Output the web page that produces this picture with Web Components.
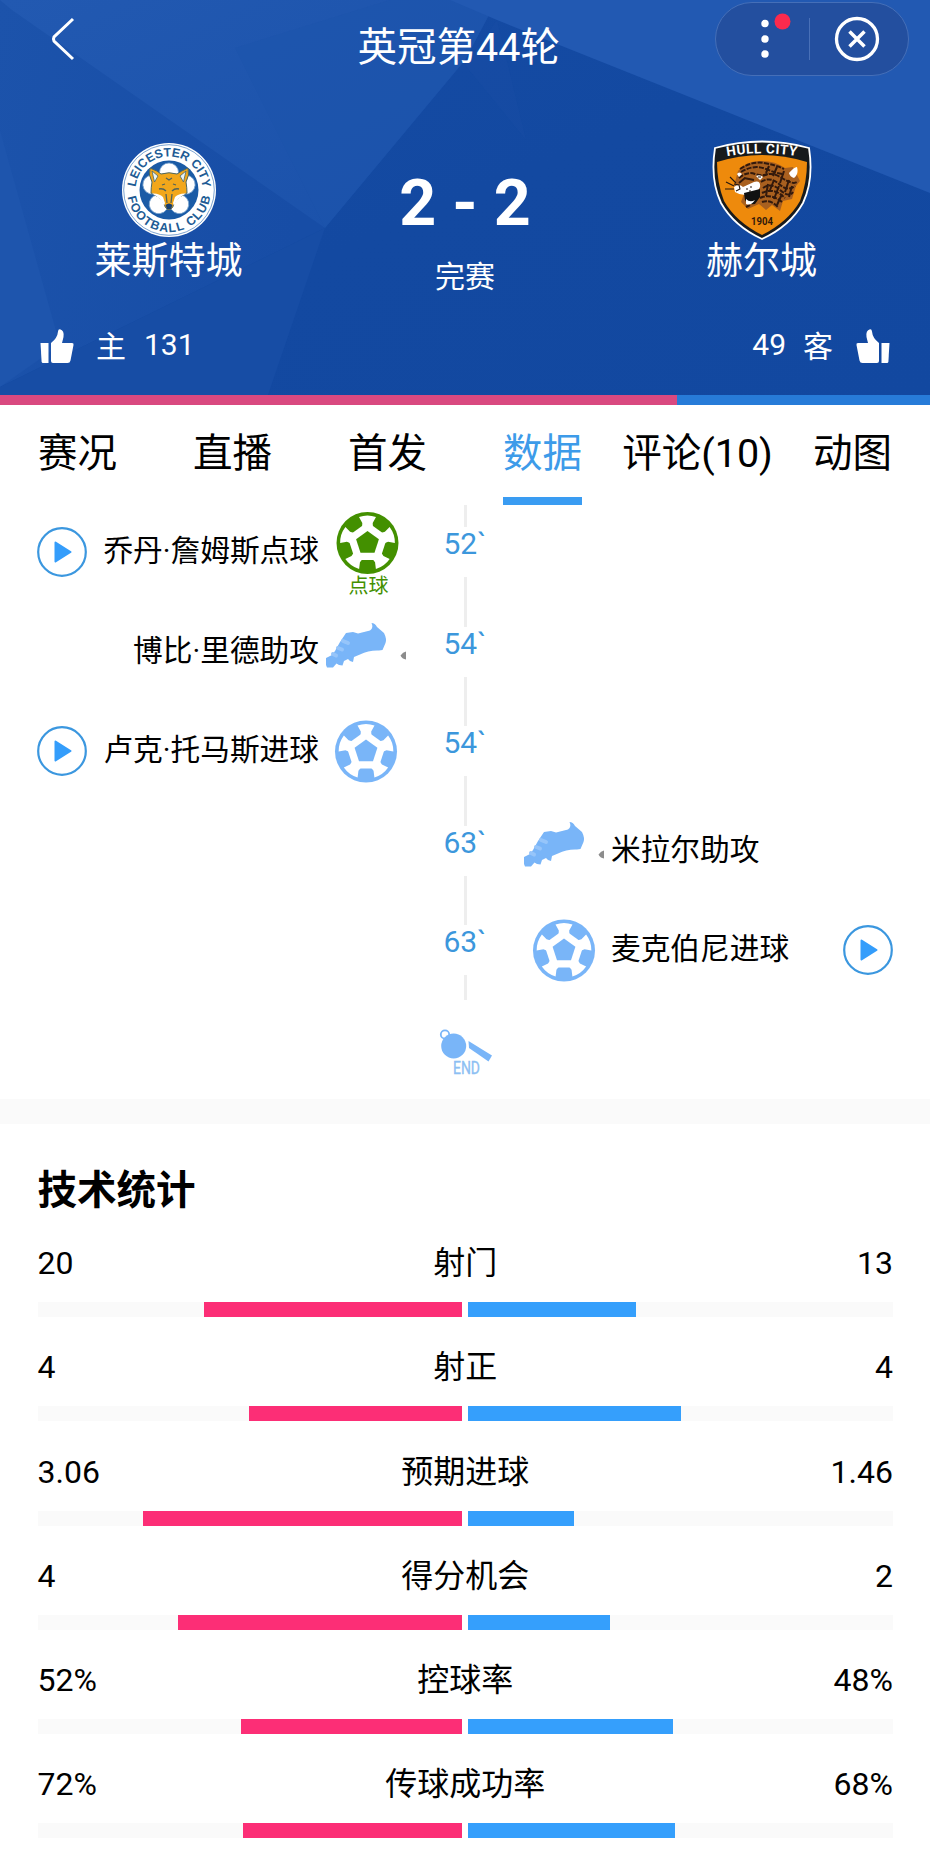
<!DOCTYPE html>
<html lang="zh-CN">
<head>
<meta charset="utf-8">
<title>英冠第44轮</title>
<style>
    body {
        margin: 0;
        width: 930px;
        height: 1857px;
        overflow: hidden;
        background: #fff;
        color: #000;
        font-family: Roboto, "Noto Sans CJK SC", sans-serif;
    }
</style>
</head>
<body>
<match-header home-likes="131" away-likes="49">
    <nav-bar slot="nav">英冠第44轮</nav-bar>
    <team-badge slot="home" crest="leicester">莱斯特城</team-badge>
    <span slot="score">2 - 2</span>
    <span slot="status">完赛</span>
    <team-badge slot="away" crest="hull">赫尔城</team-badge>
</match-header>

<tab-bar>
    <tab-item>赛况</tab-item>
    <tab-item>直播</tab-item>
    <tab-item>首发</tab-item>
    <tab-item active>数据</tab-item>
    <tab-item>评论(10)</tab-item>
    <tab-item>动图</tab-item>
</tab-bar>

<event-list>
    <match-event time="52`" side="home" icon="penalty" video>乔丹·詹姆斯点球</match-event>
    <match-event time="54`" side="home" icon="boot">博比·里德助攻</match-event>
    <match-event time="54`" side="home" icon="ball" video>卢克·托马斯进球</match-event>
    <match-event time="63`" side="away" icon="boot">米拉尔助攻</match-event>
    <match-event time="63`" side="away" icon="ball" video>麦克伯尼进球</match-event>
</event-list>

<stats-panel>
    <span slot="title">技术统计</span>
    <stat-row home="20" away="13" ratio="60.7" away-ratio="39.5">射门</stat-row>
    <stat-row home="4" away="4" ratio="50.2" away-ratio="50.2">射正</stat-row>
    <stat-row home="3.06" away="1.46" ratio="75.1" away-ratio="25">预期进球</stat-row>
    <stat-row home="4" away="2" ratio="66.9" away-ratio="33.3">得分机会</stat-row>
    <stat-row home="52%" away="48%" ratio="52.2" away-ratio="48.2">控球率</stat-row>
    <stat-row home="72%" away="68%" ratio="51.6" away-ratio="48.7">传球成功率</stat-row>
</stats-panel>

<script>
const LEICESTER = `
    <svg width="100" height="100" viewBox="-50 -50 100 100">
        <defs>
            <path id="top" d="M-33.500 0A33.500 33.500 0 0 1 33.500 0"/>
            <path id="bottom" d="M-42 0A42 42 0 0 0 42 0"/>
        </defs>
        <circle r="47" fill="#fff"/>
        <circle r="45.3" fill="none" stroke="#5d8dc4" stroke-width=".8"/>
        <circle r="29.5" fill="#1a5ba6"/>
        <g fill="#fff" stroke="#7aa5d0" stroke-width=".8">
            <circle cy="-17.5" r="9.5"/>
            <circle cy="-17.5" r="9.5" transform="rotate(72)"/>
            <circle cy="-17.5" r="9.5" transform="rotate(144)"/>
            <circle cy="-17.5" r="9.5" transform="rotate(216)"/>
            <circle cy="-17.5" r="9.5" transform="rotate(288)"/>
        </g>
        <path d="M-19-22Q-11-19-8-16Q0-18.500 8-16Q12-19 19-22Q21-15 17-8Q18-2 18 3Q10 6 6 12Q4 19 0 20Q-4 19-6 12Q-10 6-18 3Q-18-2-17-8Q-21-15-19-22Z" fill="#f2a71b" stroke="#4c6763"/>
        <path d="M-17-19L-11-14L-14.500-8ZM17-19L11-14L14.500-8Z" fill="#e9f3f6" stroke="#4c6763" stroke-width=".8"/>
        <path d="M-17 3.500Q-10 3-6 7L-4 13L-5 16Q-8 8-17 3.500ZM17 3.500Q10 3 6 7L4 13L5 16Q8 8 17 3.500Z" fill="#fff"/>
        <path d="M-10-1Q-6-2-3 1M10-1Q6-2 3 1M-3 4L-2 13M3 4L2 13M-3-12L0-10L3-12M-7-5L-4-6M7-5L4-6" fill="none" stroke="#51635a" stroke-width="1.3"/>
        <path d="M-3.500 15Q0 12 3.500 15L2 19H-2Z" fill="#173f70"/>
        <g font-family="Liberation Sans" font-size="12.3" font-weight="700" fill="#205b94">
            <text><textPath href="#top" startOffset="3" textLength="100" lengthAdjust="spacingAndGlyphs">LEICESTER CITY</textPath></text>
            <text><textPath href="#bottom" startOffset="7" textLength="118">FOOTBALL CLUB</textPath></text>
        </g>
    </svg>`;

const HULL = `
    <svg width="100" height="100" viewBox="0 0 100 100">
        <path d="M3 8Q50-5 97 8Q102 40 91 63Q78 86 50 99Q22 86 9 63Q-2 40 3 8Z" fill="#171a1c" stroke="#fff" stroke-width="1.8"/>
        <path d="M5 22Q50 8 95 22Q95 43 88 61Q76 82 50 95Q24 82 12 61Q5 43 5 22Z" fill="#ee8a0c"/>
        <g font-family="Roboto" font-weight="700">
            <path id="arc" d="M14 16.5Q50 10 87 16.5" fill="none"/>
            <text font-size="13.5" fill="#fff"><textPath href="#arc" startOffset="1" textLength="70">HULL CITY</textPath></text>
            <text x="39" y="85" font-size="11" fill="#32190a" textLength="22" lengthAdjust="spacingAndGlyphs">1904</text>
        </g>
        <path d="M22 46L26 31Q33 22 46 21Q62 20 73 28L81 27L88 41L84 46L80 59L71 61L68 71L60 65L54 70L47 64L36 69L29 62L32 54L25 53Z" fill="#a9601f"/>
        <g fill="none" stroke="#32190c" stroke-width="2">
            <path d="M28 29Q40 21 52 23T72 29M29 32Q42 24 54 29T72 34M27 38Q35 31 43 34T57 33" stroke-dasharray="5 1.3"/>
            <path d="M51 36Q59 31 70 38T85 42M49 42Q58 36 67 44T83 46M51 48Q59 42 68 50T81 52M50 53Q62 47 73 58M48 58Q59 53 70 62M50 62Q58 59 66 67" stroke-dasharray="5 1.2"/>
            <path d="M57 26L54 33M65 27L61 36M72 31L68 43M62 40L58 50M77 40L73 52M67 46L62 59M56 44L54 56M38 65L34 67M80 46L77 57M32 38L42 40M27 43L33 38M70 54L65 65"/>
        </g>
        <path d="M77 33Q82 27 85 27Q87 34 82 38Q78 37 77 33ZM22 47Q27 43 31 47L42 42Q49 40 48 47Q46 53 37 54Q29 56 23 52ZM25 34Q27 31 30 34L27 37ZM44 36Q48 34 51 37L48 40Z" fill="#fff"/>
        <path d="M32 53L48 49L48 57L43 64Q35 65 33 60Z" fill="#111"/>
        <path d="M34 59Q38 63 43 60Q39 66 34 64Z" fill="#fff"/>
        <path d="M22 44L27 45L28 49L24 51M14 42L22 46M13 49L22 49M18 37L24 43M34 49H36M38 47H40M37 51H39M46 37H49" fill="none" stroke="#24170f" stroke-width="1.1"/>
    </svg>`;

// disc with a pentagon in the middle and five flared seams
const ball = (color, dy) => {
    const seams = [0, 72, 144, 216, 288].map((a) =>
        `<path d="M-8.5-26Q0-29 8.5-26L5.2-20L5.5-14H-5.5L-5.2-20Z" transform="rotate(${a})"/>`).join('');
    return `<g transform="translate(40 ${40 + dy})">
        <circle r="31" fill="${color}"/>
        <g fill="#fff"><path d="M0-21L20-6.5L12.3 17H-12.3L-20-6.5Z"/>${seams}</g>
        <path d="M0-12L11.4-3.7L7 9.7H-7L-11.4-3.7Z" fill="${color}"/>
    </g>`;
};

const EVENT_ICONS = {
    penalty: `<g transform="translate(1.5 0)">${ball('#439000', -9)}
        <text x="41" y="80.5" font-size="20" text-anchor="middle" fill="#439000">点球</text></g>`,
    ball: ball('#79b5f8', 0.5),
    boot: `
        <path d="M0 46L6 43L9 39L14 30L20 21L27 20L32 21.500L44 18.500Q48 16 45.500 11Q49 11 51 15L58 21Q61 27 59.500 31L56.500 38L53 38.500Q43 38 34 42.500L28 45L27 50L24 49L22 47L18 49L16.500 53.500L13 53L10.500 51.500L7 55.500H1L0 53Z" fill="#79b5f8"/>
        <path d="M17 29L22 31M12 36L16 37.500M7 42L10 43.500" stroke="#96c5fa" stroke-width="4" stroke-linecap="round"/>
        <path d="M74.500 43.500Q77 40 80 39.500V47.500Q76 47 74.500 43.500Z" fill="#8c8c8c"/>`
};

const THUMB = `
    <svg width="34" height="36" viewBox="0 0 34 36" fill="#fff">
        <path d="M.5 15H8.5V35H3Q1.700 35 1.600 33.500Z"/>
        <path d="M11 15Q17.500 10 18 3.500Q18.200 1 20 1.200Q24.500 2.500 23.500 9L22 15H32Q34 15 33.500 17L30.500 32.500Q30 35 27.500 35H13Q11 35 11 33Z"/>
    </svg>`;

class NavBar extends HTMLElement {
    constructor() {
        super();
        this.attachShadow({ mode: 'open' });
        this.shadowRoot.innerHTML = `
            <style>
                :host {
                    display: grid;
                    grid-template-columns: 203px 511.500px 194px;
                    height: 96px;
                    font-size: 39.500px;
                    line-height: 96px;
                    text-align: center;
                }

                .back {
                    padding: 17px 0 0 50px;
                    line-height: 0;
                    text-align: left;
                }

                .capsule {
                    box-sizing: border-box;
                    height: 74px;
                    margin-top: 2px;
                    border: 1px solid #456fb8;
                    border-radius: 37px;
                    background: #234f9f;
                    line-height: 0;
                }
            </style>
            <div class="back">
                <svg width="26" height="44" fill="none" stroke="#fff" stroke-width="3"><path d="M23 2L4 20Q3 22 4 24L23 42"/></svg>
            </div>
            <div><slot></slot></div>
            <div class="capsule">
                <svg width="192" height="72" viewBox="716 3 192 72">
                    <g fill="#fff"><circle cx="765" cy="23.500" r="3.700"/><circle cx="765" cy="39" r="3.700"/><circle cx="765" cy="54" r="3.700"/></g>
                    <circle cx="782.500" cy="21.500" r="8" fill="#fb2a4d"/>
                    <path d="M809.500 18V60" stroke="#4870b8"/>
                    <circle cx="857" cy="39" r="20.500" fill="none" stroke="#fff" stroke-width="3.300"/>
                    <path d="M849.500 31.500L864.500 46.500M864.500 31.500L849.500 46.500" stroke="#fff" stroke-width="3.500"/>
                </svg>
            </div>
        `;
    }
}

class TeamBadge extends HTMLElement {
    connectedCallback() {
        this.attachShadow({ mode: 'open' });
        const crest = this.getAttribute('crest') === 'hull' ? HULL : LEICESTER;
        this.shadowRoot.innerHTML = `
            <style>
                :host {
                    display: flex;
                    flex-direction: column;
                    align-items: center;
                    padding-top: 44px;
                    font-size: 37px;
                    line-height: 44px;
                }

                svg {
                    display: block;
                }
            </style>
            ${crest}
            <div><slot></slot></div>
        `;
    }
}

class MatchHeader extends HTMLElement {
    connectedCallback() {
        this.attachShadow({ mode: 'open' });
        const home = Number(this.getAttribute('home-likes'));
        const away = Number(this.getAttribute('away-likes'));
        this.shadowRoot.innerHTML = `
            <style>
                :host {
                    display: block;
                    position: relative;
                    height: 405px;
                    color: #fff;
                }

                .bg {
                    position: absolute;
                    top: 0;
                    left: 0;
                    z-index: -1;
                }

                .teams {
                    display: grid;
                    grid-template-columns: 337px 1fr 337px;
                    height: 202px;
                }

                .result {
                    padding-top: 75px;
                    text-align: center;
                }

                .score {
                    font-size: 64.500px;
                    font-weight: 700;
                    line-height: 65px;
                }

                .status {
                    margin-top: 20px;
                    font-size: 30px;
                    line-height: 42px;
                }

                .likes {
                    display: flex;
                    justify-content: space-between;
                    height: 97px;
                    padding: 0 40px;
                    font-size: 30px;
                    line-height: 94px;
                }

                .side {
                    display: flex;
                }

                .side.away {
                    flex-direction: row-reverse;
                }

                .side svg {
                    margin-top: 30px;
                }

                .away svg {
                    transform: scaleX(-1);
                }

                .side .label {
                    margin: 2px 18px 0 22px;
                }

                .side.away .label {
                    margin: 2px 23px 0 17px;
                }

                .ratio {
                    display: flex;
                    height: 10px;
                    background: #277bd8;
                }

                .ratio i {
                    width: ${home / (home + away) * 100}%;
                    background: #d94980;
                }
            </style>
            <svg class="bg" width="930" height="395">
                <defs>
                    <linearGradient id="dark" x2="1" y2="1"><stop stop-color="#164ca5"/><stop offset=".5" stop-color="#1349a1"/><stop offset="1" stop-color="#1248a0"/></linearGradient>
                    <linearGradient id="left" x2="1" y2=".3"><stop stop-color="#1c53ab"/><stop offset="1" stop-color="#174da6"/></linearGradient>
                    <linearGradient id="light" x2="1" y2="1"><stop stop-color="#2259b1"/><stop offset="1" stop-color="#1a51aa"/></linearGradient>
                </defs>
                <path d="M0 0H930V395H0Z" fill="url(#dark)"/>
                <path d="M0 0H13L325 228L0 387Z" fill="url(#left)"/>
                <path d="M0 130L60 345L0 387Z" fill="#1e55ad"/>
                <path d="M0 0H497L465 60L325 228L12 10Z" fill="url(#light)"/>
                <path d="M235 48L390 0H497L465 60L325 228Z" fill="#1c53ac" opacity=".5"/>
                <path d="M0 387L325 228L268 395H0Z" fill="#174da5"/>
                <path d="M400 0H930V193L497 20L450 0Z" fill="#2259b2"/>
                <path d="M497 20L465 65L526 140Z" fill="#184da5" opacity=".4"/>
            </svg>
            <slot name="nav"></slot>
            <div class="teams">
                <slot name="home"></slot>
                <div class="result">
                    <div class="score"><slot name="score"></slot></div>
                    <div class="status"><slot name="status"></slot></div>
                </div>
                <slot name="away"></slot>
            </div>
            <div class="likes">
                <div class="side">${THUMB}<span class="label">主</span><span>${home}</span></div>
                <div class="side away">${THUMB}<span class="label">客</span><span>${away}</span></div>
            </div>
            <div class="ratio"><i></i></div>
        `;
    }
}

class TabBar extends HTMLElement {
    constructor() {
        super();
        this.attachShadow({ mode: 'open' });
        this.shadowRoot.innerHTML = `
            <style>
                :host {
                    display: grid;
                    grid-template-columns: repeat(6, 1fr);
                    height: 100px;
                }
            </style>
            <slot></slot>
        `;
    }
}

class TabItem extends HTMLElement {
    constructor() {
        super();
        this.attachShadow({ mode: 'open' });
        this.shadowRoot.innerHTML = `
            <style>
                :host {
                    display: flex;
                    justify-content: center;
                    font-size: 39.500px;
                    line-height: 86px;
                }

                div {
                    padding-top: 6px;
                    border-bottom: 8px solid transparent;
                    white-space: nowrap;
                }

                :host([active]) div {
                    color: #3d9be9;
                    border-color: #3a9cf2;
                }
            </style>
            <div><slot></slot></div>
        `;
    }
}

class EventList extends HTMLElement {
    constructor() {
        super();
        this.attachShadow({ mode: 'open' });
        this.shadowRoot.innerHTML = `
            <style>
                :host {
                    display: block;
                    height: 594px;
                    overflow: hidden;
                }

                .rows {
                    margin-top: -2.500px;
                }

                .end {
                    display: block;
                    margin: 0 auto;
                }
            </style>
            <div class="rows"><slot></slot></div>
            <svg class="end" width="60" height="99" viewBox="435 1000 60 99">
                <circle cx="445" cy="1034.500" r="4.200" fill="none" stroke="#79b5f8" stroke-width="1.800"/>
                <circle cx="453.700" cy="1046" r="12.500" fill="#79b5f8"/>
                <path d="M468.500 1041L492 1055.500L488.500 1061.500L469 1048Z" fill="#79b5f8"/>
                <text x="453" y="1074" font-size="18" fill="#8dbff3" stroke="#8dbff3" stroke-width=".4" textLength="27" lengthAdjust="spacingAndGlyphs">END</text>
            </svg>
        `;
    }
}

class MatchEvent extends HTMLElement {
    connectedCallback() {
        this.attachShadow({ mode: 'open' });
        const play = this.hasAttribute('video') ? `
            <svg class="play" width="50" height="50" viewBox="-25 -25 50 50">
                <circle r="23.800" fill="none" stroke="#3b97df" stroke-width="2.200"/>
                <path d="M-6.500-9.500L8.500 0L-6.500 9.500Z" fill="#349dfb" stroke="#349dfb" stroke-width="2" stroke-linejoin="round"/>
            </svg>` : '';
        this.shadowRoot.innerHTML = `
            <style>
                :host {
                    display: grid;
                    grid-template-columns: 1fr 118px 1fr;
                    height: 99.500px;
                    font-size: 29.700px;
                }

                .info {
                    grid-row: 1;
                    grid-column: 3;
                    display: flex;
                    align-items: center;
                    padding-right: 37px;
                }

                :host([side="home"]) .info {
                    grid-column: 1;
                    flex-direction: row-reverse;
                    padding: 0 0 0 37px;
                }

                .icon {
                    overflow: visible;
                }

                .text {
                    flex: 1;
                    margin: 0 7px;
                    padding-bottom: 2px;
                    line-height: 50px;
                    white-space: nowrap;
                }

                :host([side="home"]) .text {
                    text-align: right;
                }

                .axis {
                    grid-row: 1;
                    grid-column: 2;
                    display: flex;
                    flex-direction: column;
                    align-items: center;
                }

                .axis i {
                    flex: 1;
                    width: 3px;
                    margin-left: 1px;
                    background: #eee;
                }

                .time {
                    height: 50px;
                    font-size: 30px;
                    line-height: 33px;
                    color: #3c97dc;
                }
            </style>
            <div class="info">
                <svg class="icon" width="80" height="80">${EVENT_ICONS[this.getAttribute('icon')]}</svg>
                <span class="text"><slot></slot></span>
                ${play}
            </div>
            <div class="axis"><i></i><span class="time">${this.getAttribute('time')}</span><i></i></div>
        `;
    }
}

class StatsPanel extends HTMLElement {
    constructor() {
        super();
        this.attachShadow({ mode: 'open' });
        this.shadowRoot.innerHTML = `
            <style>
                :host {
                    display: block;
                    border-top: 25px solid #fafafa;
                    padding: 19px 37px 0 37.500px;
                }

                .title {
                    font-size: 39.500px;
                    font-weight: 700;
                    line-height: 96px;
                }
            </style>
            <div class="title"><slot name="title"></slot></div>
            <slot></slot>
        `;
    }
}

class StatRow extends HTMLElement {
    connectedCallback() {
        this.attachShadow({ mode: 'open' });
        this.shadowRoot.innerHTML = `
            <style>
                :host {
                    display: block;
                    height: 104.300px;
                    font-size: 32px;
                    line-height: 48px;
                }

                .head {
                    display: grid;
                    grid-template-columns: 1fr auto 1fr;
                }

                .head :last-child {
                    text-align: right;
                }

                .bars {
                    display: grid;
                    grid-template-columns: 1fr 1fr;
                    gap: 6px;
                    height: 15px;
                    margin-top: 15px;
                }

                .track {
                    display: flex;
                    background: #fafafa;
                }

                .track.home {
                    justify-content: flex-end;
                }

                .home i {
                    width: ${this.getAttribute('ratio')}%;
                    background: #fc2e76;
                }

                .away i {
                    width: ${this.getAttribute('away-ratio')}%;
                    background: #359ffc;
                }
            </style>
            <div class="head">
                <span>${this.getAttribute('home')}</span>
                <span><slot></slot></span>
                <span>${this.getAttribute('away')}</span>
            </div>
            <div class="bars">
                <div class="track home"><i></i></div>
                <div class="track away"><i></i></div>
            </div>
        `;
    }
}

customElements.define('nav-bar', NavBar);
customElements.define('team-badge', TeamBadge);
customElements.define('match-header', MatchHeader);
customElements.define('tab-bar', TabBar);
customElements.define('tab-item', TabItem);
customElements.define('event-list', EventList);
customElements.define('match-event', MatchEvent);
customElements.define('stats-panel', StatsPanel);
customElements.define('stat-row', StatRow);
</script>
</body>
</html>
